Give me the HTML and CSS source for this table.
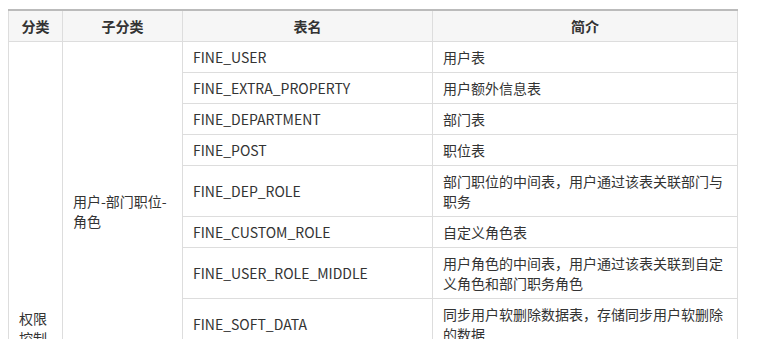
FILE: index.html
```html
<!DOCTYPE html>
<html lang="zh">
<head>
<meta charset="utf-8">
<title>表</title>
<link rel="stylesheet" href="styles.css">
</head>
<body>
<table class="tbl">
  <colgroup>
    <col class="c1"><col class="c2"><col class="c3"><col class="c4">
  </colgroup>
  <thead>
    <tr><th>分类</th><th>子分类</th><th>表名</th><th>简介</th></tr>
  </thead>
  <tbody>
    <tr><td rowspan="16">权限控制</td><td rowspan="9">用户-部门职位-角色</td><td>FINE_USER</td><td>用户表</td></tr>
    <tr><td>FINE_EXTRA_PROPERTY</td><td>用户额外信息表</td></tr>
    <tr><td>FINE_DEPARTMENT</td><td>部门表</td></tr>
    <tr><td>FINE_POST</td><td>职位表</td></tr>
    <tr><td>FINE_DEP_ROLE</td><td>部门职位的中间表，用户通过该表关联部门与职务</td></tr>
    <tr><td>FINE_CUSTOM_ROLE</td><td>自定义角色表</td></tr>
    <tr><td>FINE_USER_ROLE_MIDDLE</td><td>用户角色的中间表，用户通过该表关联到自定义角色和部门职务角色</td></tr>
    <tr><td>FINE_SOFT_DATA</td><td>同步用户软删除数据表，存储同步用户软删除的数据</td></tr>
    <tr><td>FINE_POST_USER</td><td>职位用户表</td></tr>
    <tr><td rowspan="7">权限</td><td>FINE_AUTHORITY</td><td>权限表</td></tr>
    <tr><td>FINE_AUTHORITY_OBJECT</td><td>权限实体表</td></tr>
    <tr><td>FINE_AUTH_PREFERENCE</td><td>权限偏好设置表</td></tr>
    <tr><td>FINE_SYSTEM_AUTH</td><td>系统权限表</td></tr>
    <tr><td>FINE_ENTRY_AUTH</td><td>目录权限表</td></tr>
    <tr><td>FINE_TEMPLATE_AUTH</td><td>模板权限表</td></tr>
    <tr class="tight"><td>FINE_AUTH_MIDDLE</td><td>权限中间表，用于记录权限分配给的用户、部门职位以及角色</td></tr>
  </tbody>
</table>
</body>
</html>
```
FILE: styles.css
```css
html, body {
  margin: 0;
  padding: 0;
  background: #fff;
}
body {
  padding: 9px 8px 8px;
  font-family: "Noto Sans CJK SC", sans-serif;
  font-size: 14px;
  line-height: 20px;
  color: #333;
}
.tbl {
  border-collapse: collapse;
  width: 729px;
  table-layout: fixed;
}
.c1 { width: 54px; }
.c2 { width: 120px; }
.c3 { width: 250px; }
.c4 { width: 305px; }
.tbl th,
.tbl td {
  border: 1px solid #ddd;
  padding: 5px 10px;
  text-align: left;
  vertical-align: middle;
  word-break: break-all;
}
.tbl thead th {
  background: #f6f6f6;
  text-align: center;
  font-weight: bold;
  border-top: 2px solid #bbb;
}
.tbl .tight td {
  padding-top: 3px;
  padding-bottom: 3px;
}
```
